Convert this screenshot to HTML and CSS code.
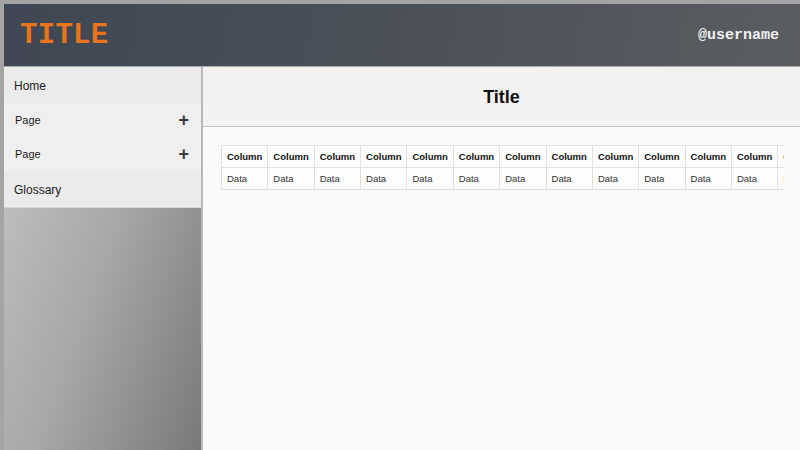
FILE: index.html
```html
<!DOCTYPE html>
<html lang="en">
<head>
    <meta charset="UTF-8">
    <meta name="viewport" content="width=device-width, initial-scale=1.0">
    <title>Title</title>
    <link rel="stylesheet" href="styles.css">
</head>
<body>

    <header class="topbar">
        <div class="brand">TITLE</div>
        <div class="user">@username</div>
    </header>

    <div class="layout">
        <!-- Menu lateral -->
        <nav class="sidebar">
            <a class="nav-item nav-main" href="#">Home</a>
            <a class="nav-item nav-sub" href="#">Page <span class="plus">+</span></a>
            <a class="nav-item nav-sub" href="#">Page <span class="plus">+</span></a>
            <a class="nav-item nav-main" href="#">Glossary</a>
        </nav>

        <main class="main">
            <div class="page-title">Title</div>
            <div class="content">
                <div class="table-wrap">
                    <table class="data-table">
                        <thead>
                            <tr id="headRow"></tr>
                        </thead>
                        <tbody>
                            <tr id="dataRow"></tr>
                        </tbody>
                    </table>
                </div>
            </div>
        </main>
    </div>

    <script>
        // Rellenar la tabla con columnas de ejemplo
        const headRow = document.getElementById('headRow');
        const dataRow = document.getElementById('dataRow');
        for (let i = 0; i < 13; i++) {
            const th = document.createElement('th');
            th.textContent = 'Column';
            headRow.appendChild(th);
            const td = document.createElement('td');
            td.textContent = 'Data';
            dataRow.appendChild(td);
        }
    </script>

</body>
</html>
```

FILE: styles.css
```css
/* Estilos Globales */
html, body {
    height: 100%;
}

body {
    font-family: 'Liberation Sans', Arial, sans-serif;
    background-color: #a4a4a4;
    margin: 0;
    padding: 4px 0 0 4px;
    box-sizing: border-box;
    display: flex;
    flex-direction: column;
    overflow: hidden;
    color: #222;
}

/* Cabecera */
.topbar {
    height: 62px;
    flex-shrink: 0;
    display: flex;
    justify-content: space-between;
    align-items: center;
    padding: 0 21px 0 16px;
    background: linear-gradient(100deg, #3e4753 0%, #4b5058 50%, #5b5d61 100%);
    border-bottom: 1px solid #a9a9a9;
}

.brand {
    font-family: 'Liberation Mono', monospace;
    font-weight: bold;
    font-size: 29px;
    color: #e8741c;
    letter-spacing: 0.3px;
}

.user {
    font-family: 'Liberation Mono', monospace;
    font-weight: bold;
    font-size: 15px;
    color: #f2f2f2;
    padding-top: 1px;
}

.layout {
    flex: 1;
    display: flex;
    min-height: 0;
}

/* Menu lateral */
.sidebar {
    width: 197px;
    flex-shrink: 0;
    display: flex;
    flex-direction: column;
    background: linear-gradient(110deg, #c6c6c6 0%, #a9a7a9 50%, #7b787b 100%);
    border-right: 2px solid #b9b9b9;
}

.nav-item {
    display: flex;
    justify-content: space-between;
    align-items: center;
    text-decoration: none;
    color: #1c1c1c;
}

.nav-main {
    height: 36px;
    padding: 2px 10px 0;
    box-sizing: border-box;
    font-size: 12px;
    background-color: #ebebeb;
}

.nav-main:last-child {
    border-bottom: 1px solid #d6d6d6;
    height: 37px;
}

.nav-sub {
    height: 34px;
    padding: 0 12px 0 11px;
    font-size: 11px;
    background-color: #efefef;
}

.plus {
    font-size: 18px;
    font-weight: bold;
    color: #3a3a3a;
    line-height: 1;
}

/* Zona principal */
.main {
    flex: 1;
    display: flex;
    flex-direction: column;
    min-width: 0;
    background-color: #fafafa;
}

.page-title {
    height: 60px;
    flex-shrink: 0;
    display: flex;
    justify-content: center;
    align-items: center;
    padding-top: 2px;
    box-sizing: border-box;
    font-size: 18px;
    font-weight: bold;
    color: #111;
    background-color: #f3f2f0;
    border-bottom: 1px solid #c3c3c3;
}

.content {
    padding: 18px 16px 0 18px;
}

.table-wrap {
    overflow: hidden;
}

.data-table {
    border-collapse: collapse;
    background-color: #fdfdfd;
}

.data-table th,
.data-table td {
    border: 1px solid #e0e0e0;
    padding: 5px;
    font-size: 9.5px;
    line-height: 11px;
    text-align: left;
    white-space: nowrap;
}

.data-table th {
    font-weight: bold;
    color: #111;
}

.data-table td {
    color: #333;
    min-width: 35px;
}
```
